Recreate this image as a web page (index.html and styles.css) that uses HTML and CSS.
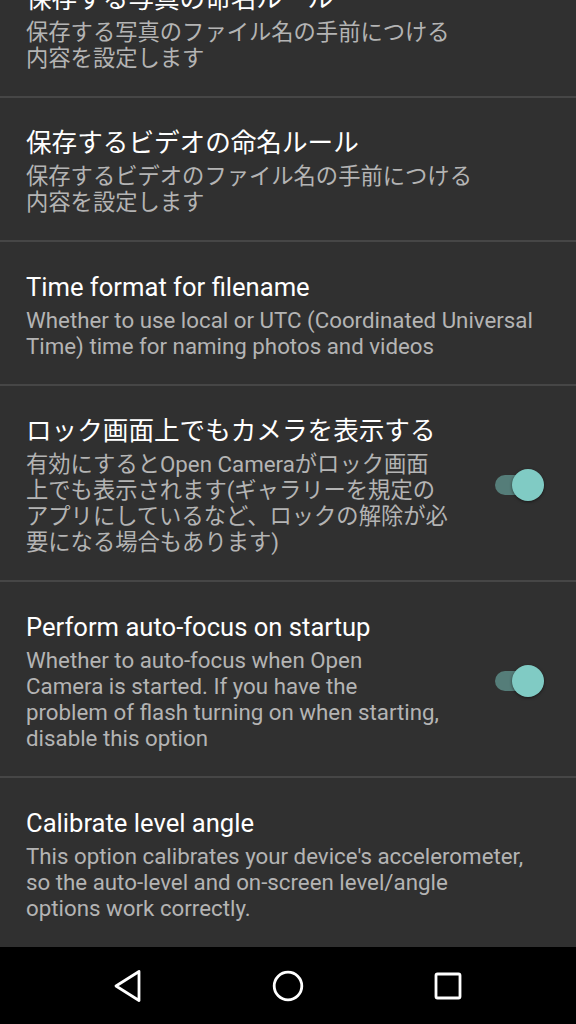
FILE: index.html
```html
<!DOCTYPE html>
<html lang="ja">
<head>
<meta charset="utf-8">
<link rel="stylesheet" href="styles.css">
</head>
<body>
<div class="screen">
  <div class="list">
    <div class="item">
      <div class="text">
        <div class="title">保存する写真の命名ルール</div>
        <div class="summary">保存する写真のファイル名の手前につける<br>内容を設定します</div>
      </div>
    </div>
    <div class="item">
      <div class="text">
        <div class="title">保存するビデオの命名ルール</div>
        <div class="summary">保存するビデオのファイル名の手前につける<br>内容を設定します</div>
      </div>
    </div>
    <div class="item">
      <div class="text">
        <div class="title">Time format for filename</div>
        <div class="summary">Whether to use local or UTC (Coordinated Universal<br>Time) time for naming photos and videos</div>
      </div>
    </div>
    <div class="item">
      <div class="text">
        <div class="title">ロック画面上でもカメラを表示する</div>
        <div class="summary">有効にするとOpen Cameraがロック画面<br>上でも表示されます(ギャラリーを規定の<br>アプリにしているなど、ロックの解除が必<br>要になる場合もあります)</div>
      </div>
      <div class="switch"><span class="track"></span><span class="thumb"></span></div>
    </div>
    <div class="item">
      <div class="text">
        <div class="title">Perform auto-focus on startup</div>
        <div class="summary">Whether to auto-focus when Open<br>Camera is started. If you have the<br>problem of flash turning on when starting,<br>disable this option</div>
      </div>
      <div class="switch"><span class="track"></span><span class="thumb"></span></div>
    </div>
    <div class="item last">
      <div class="text">
        <div class="title">Calibrate level angle</div>
        <div class="summary">This option calibrates your device's accelerometer,<br>so the auto-level and on-screen level/angle<br>options work correctly.</div>
      </div>
    </div>
  </div>
  <nav class="navbar">
    <svg class="nav-icon" width="34" height="34" viewBox="0 0 34 34"><path d="M28 2.5 L5 17 L28 31.5 Z" fill="none" stroke="#fff" stroke-width="2.8" stroke-linejoin="round"/></svg>
    <svg class="nav-icon" width="34" height="34" viewBox="0 0 34 34"><circle cx="17" cy="17" r="13.8" fill="none" stroke="#fff" stroke-width="2.8"/></svg>
    <svg class="nav-icon" width="34" height="34" viewBox="0 0 34 34"><rect x="5" y="5" width="24" height="24" rx="1.5" fill="none" stroke="#fff" stroke-width="2.8"/></svg>
  </nav>
</div>
</body>
</html>
```

FILE: styles.css
```css
html, body {
  margin: 0;
  padding: 0;
  background: #303030;
}
.screen {
  width: 576px;
  height: 1024px;
  overflow: hidden;
  display: flex;
  flex-direction: column;
  background: #303030;
  font-family: Roboto, "Noto Sans CJK JP", sans-serif;
}
.list {
  flex: 1;
  overflow: hidden;
  margin-top: -46px;
}
.item {
  display: flex;
  align-items: center;
  padding: 29px 26px 25px 26px;
  border-bottom: 2px solid #464646;
}
.item.last {
  border-bottom: none;
}
.text {
  flex: 1;
  min-width: 0;
}
.title {
  color: #ffffff;
  font-size: 25.6px;
  line-height: 32px;
  white-space: nowrap;
}
.summary {
  margin-top: 4px;
  color: #b4b4b4;
  font-size: 22.3px;
  line-height: 26px;
  white-space: nowrap;
}
.switch {
  position: relative;
  width: 55px;
  height: 34px;
  flex: none;
}
.track {
  position: absolute;
  left: 0;
  top: 7px;
  width: 46px;
  height: 20px;
  border-radius: 10px;
  background: #557d79;
}
.thumb {
  position: absolute;
  left: 17px;
  top: 1px;
  width: 32px;
  height: 32px;
  border-radius: 50%;
  background: #80cbc4;
  box-shadow: 0 1px 3px rgba(0,0,0,0.5);
}
.navbar {
  flex: none;
  height: 77px;
  background: #000;
  display: flex;
  align-items: center;
  justify-content: center;
  gap: 126px;
}
.nav-icon {
  display: block;
}
```
